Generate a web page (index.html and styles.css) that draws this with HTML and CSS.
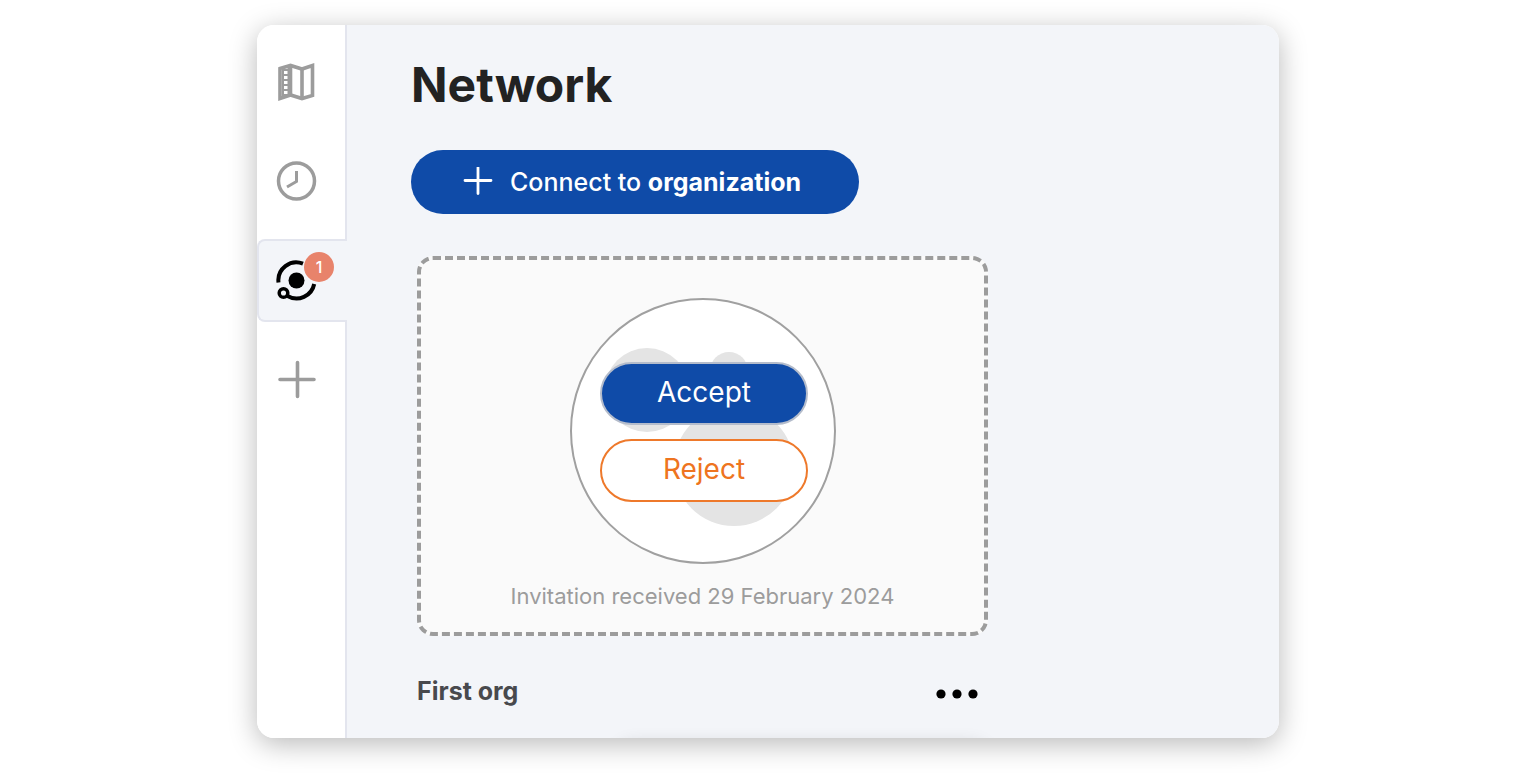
FILE: index.html
```html
<!DOCTYPE html>
<html lang="en">
<head>
<meta charset="utf-8">
<meta name="viewport" content="width=device-width, initial-scale=1">
<title>Network</title>
<link rel="stylesheet" href="styles.css">
</head>
<body>
<div class="window">
  <nav class="sidebar" aria-label="Main">
    <a class="nav-item" href="#map" aria-label="Map">
      <svg class="nav-icon" viewBox="0 0 44 44" fill="none" stroke="#9c9c9c" stroke-width="3.600">
        <path d="M5 7.500 15.500 4.500 27 8 37.500 4.500V34.500L27 37.500 15.500 34 5 37.500Z"/>
        <path d="M15.500 5V34M27 8V37"/>
        <path d="M8 8V35M13.500 6V34" stroke-width="2"/>
        <path d="M11 8V35" stroke-width="4" stroke-dasharray="2 3"/>
      </svg>
    </a>
    <a class="nav-item" href="#history" aria-label="History">
      <svg class="nav-icon" viewBox="0 0 44 44" fill="none" stroke="#9c9c9c" stroke-width="3.500">
        <circle cx="21.500" cy="21" r="18"/>
        <path d="M21.500 11V21.500L12 27" stroke-width="3"/>
      </svg>
    </a>
    <a class="nav-item nav-item-active" href="#network" aria-label="Network, 1 notification" aria-current="page">
      <svg class="nav-icon" viewBox="0 0 44 44" fill="none" stroke="#000" stroke-width="4">
        <circle cx="21.500" cy="21.500" r="8" fill="#000" stroke="none"/>
        <path d="M3.500 23.500A18 18 0 0 1 28 4.600"/>
        <path d="M39.200 25A18 18 0 0 1 12.500 37"/>
        <circle cx="8.500" cy="34" r="4.300" stroke-width="3.500"/>
      </svg>
      <span class="badge">1</span>
    </a>
    <a class="nav-item" href="#add" aria-label="Add">
      <svg class="nav-icon" viewBox="0 0 44 44" fill="none" stroke="#9c9c9c" stroke-width="3.600" stroke-linecap="round">
        <path d="M22.500 4.500V38.500M5 21.500H39"/>
      </svg>
    </a>
  </nav>
  <main class="content">
    <h1 class="title">Network</h1>
    <button class="connect" type="button">
      <svg class="connect-icon" viewBox="0 0 30 30" fill="none" stroke="#fff" stroke-width="2.800" stroke-linecap="round">
        <path d="M15 .500V26.500M2 13.500H28"/>
      </svg>
      <span>Connect to <strong>organization</strong></span>
    </button>
    <section class="invitation">
      <div class="avatar">
        <svg class="avatar-art" viewBox="0 0 262 262" fill="#e4e4e4" aria-hidden="true">
          <circle cx="75" cy="90" r="42"/>
          <circle cx="157" cy="71" r="19"/>
          <circle cx="162" cy="166" r="60"/>
        </svg>
        <button class="choice accept" type="button">Accept</button>
        <button class="choice reject" type="button">Reject</button>
      </div>
      <p class="received">Invitation received 29 February 2024</p>
    </section>
    <section class="org">
      <header class="org-head">
        <h2 class="org-name">First org</h2>
        <button class="more" type="button" aria-label="More options">
          <svg class="more-icon" viewBox="0 0 42 10"><circle cx="5" cy="5" r="4.600"/><circle cx="21" cy="5" r="4.600"/><circle cx="37" cy="5" r="4.600"/></svg>
        </button>
      </header>
      <div class="org-card"></div>
    </section>
  </main>
</div>
</body>
</html>
```

FILE: styles.css
```css
* { box-sizing: border-box; }

body {
  margin: 0;
  height: 100vh;
  padding: 25px 16px 41px;
  background: #fff;
  font-family: Inter, "Liberation Sans", sans-serif;
}

button { font: inherit; cursor: pointer; }

.window {
  display: flex;
  height: 100%;
  max-width: 1022px;
  margin: 0 auto;
  border-radius: 17px;
  box-shadow: 0 6px 28px rgba(0, 0, 0, 0.28);
}

.sidebar {
  display: flex;
  flex-direction: column;
  gap: 16px;
  width: 90px;
  flex: none;
  padding-top: 16px;
  background: #fff;
  border-right: 2px solid #e3e5ee;
  border-radius: 17px 0 0 17px;
}

.nav-item {
  position: relative;
  display: flex;
  align-items: center;
  height: 83px;
  padding-left: 18px;
}

.nav-item-active {
  margin-right: -2px;
  padding-left: 16px;
  background: #f3f5f9;
  border: 2px solid #e3e5ee;
  border-right: 0;
  border-radius: 8px 0 0 8px;
}

.nav-icon { width: 44px; height: 44px; }

.badge {
  position: absolute;
  top: 11px;
  right: 13px;
  width: 30px;
  height: 30px;
  border-radius: 50%;
  background: #e8836b;
  color: #fff;
  font-size: 16px;
  font-weight: 500;
  line-height: 30px;
  text-align: center;
}

.content {
  flex: 1;
  min-width: 0;
  padding: 28px 64px 0;
  overflow: hidden;
  background: #f3f5f9;
  border-radius: 0 17px 17px 0;
}

.title {
  margin: 0;
  color: #222;
  font-size: 48px;
  font-weight: 700;
  line-height: 64px;
}

.connect {
  display: flex;
  align-items: center;
  gap: 17px;
  height: 64px;
  margin-top: 33px;
  padding: 0 58px 0 52px;
  border: 0;
  border-radius: 32px;
  background: #0f4ba8;
  color: #fff;
  font-size: 25px;
  font-weight: 500;
}

.connect-icon { width: 30px; height: 30px; }

.invitation {
  display: flex;
  flex-direction: column;
  align-items: center;
  max-width: 571px;
  margin: 42px 0 0 6px;
  padding: 38px 16px 20px;
  border: 4px dashed #9c9c9c;
  border-radius: 16px;
  background: #fafafa;
}

.avatar {
  position: relative;
  display: flex;
  flex-direction: column;
  align-items: center;
  gap: 14px;
  width: 266px;
  height: 266px;
  padding: 62px 0 0 3px;
  border: 2px solid #a0a0a0;
  border-radius: 50%;
  background: #fff;
}

.avatar-art { position: absolute; inset: 0; }

.choice {
  position: relative;
  width: 208px;
  height: 63px;
  padding: 0 0 4px;
  border-radius: 32px;
  font-size: 28px;
}

.accept {
  border: 2px solid #b4bccb;
  background: #0f4ba8;
  color: #fff;
}

.reject {
  border: 2px solid #ee792b;
  background: #fff;
  color: #ee7420;
}

.received {
  margin: 16px 0 0;
  color: #9c9c9c;
  font-size: 22px;
  line-height: 32px;
}

.org {
  max-width: 571px;
  margin: 37px 0 0 6px;
}

.org-head {
  display: flex;
  align-items: center;
  justify-content: space-between;
  padding-right: 10px;
}

.org-name {
  margin: 0;
  color: #48494d;
  font-size: 25px;
  font-weight: 700;
  line-height: 36px;
}

.more {
  display: flex;
  padding: 8px 0 2px;
  border: 0;
  background: none;
}

.more-icon { width: 42px; height: 10px; }

.org-card {
  height: 380px;
  margin: 35px 0 0 200px;
  border-radius: 16px;
  background: #fff;
  box-shadow: 0 0 18px rgba(0, 0, 0, 0.14);
}
```
